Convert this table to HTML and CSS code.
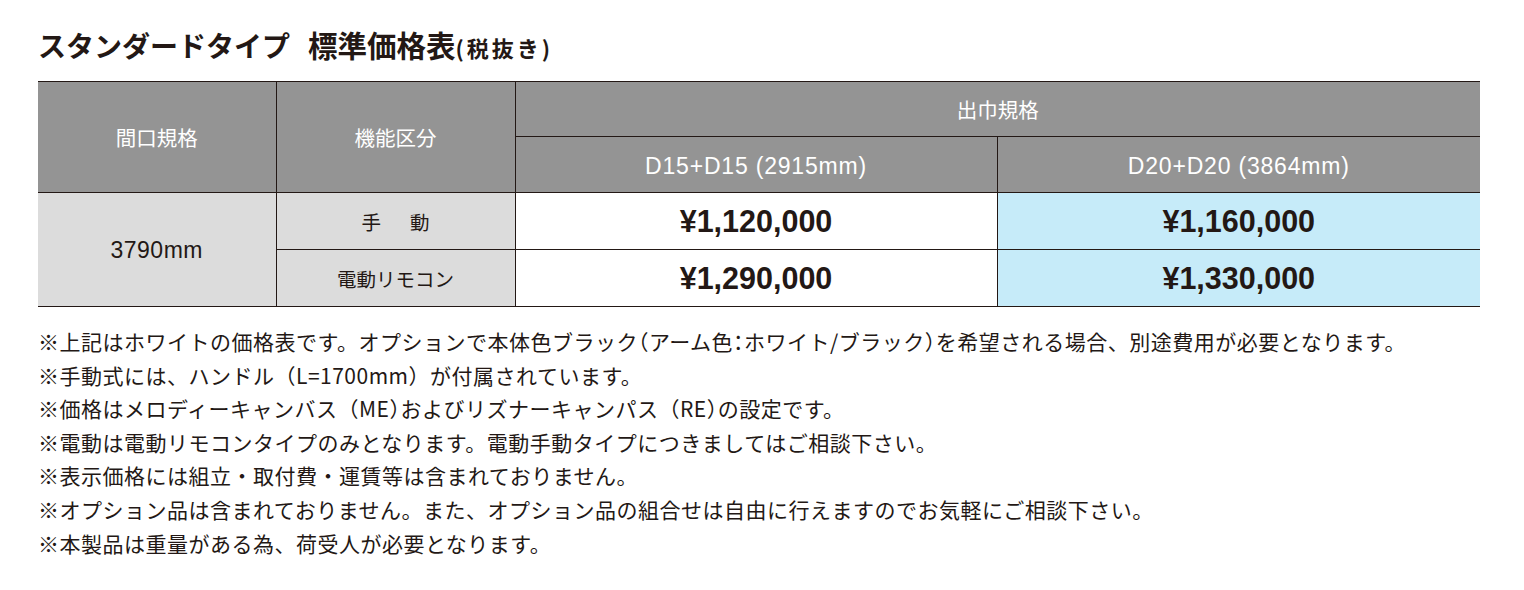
FILE: index.html
```html
<!DOCTYPE html>
<html lang="ja">
<head>
<meta charset="utf-8">
<link rel="stylesheet" href="styles.css">
</head>
<body>
<div class="page">
  <h1 class="title">スタンダードタイプ<span class="title-gap"></span><span class="title-kanji">標準価格表</span><span class="title-sub">(税抜き)</span></h1>
  <table class="price-table">
    <colgroup>
      <col class="c1"><col class="c2"><col class="c3"><col class="c4">
    </colgroup>
    <thead>
      <tr class="h1">
        <th rowspan="2">間口規格</th>
        <th rowspan="2">機能区分</th>
        <th colspan="2">出巾規格</th>
      </tr>
      <tr class="h2">
        <th><span class="latin">D15+D15 (2915mm)</span></th>
        <th><span class="latin">D20+D20 (3864mm)</span></th>
      </tr>
    </thead>
    <tbody>
      <tr>
        <td rowspan="2" class="size"><span class="latin">3790mm</span></td>
        <td class="kind">手<span class="kind-gap"></span>動</td>
        <td class="price">¥1,120,000</td>
        <td class="price blue">¥1,160,000</td>
      </tr>
      <tr>
        <td class="kind">電動リモコン</td>
        <td class="price">¥1,290,000</td>
        <td class="price blue">¥1,330,000</td>
      </tr>
    </tbody>
  </table>
  <ul class="notes">
    <li>※上記はホワイトの価格表です。オプションで本体色ブラック<span class="half">（</span>アーム色<span class="half">：</span>ホワイト/ブラック<span class="half">）</span>を希望される場合、別途費用が必要となります。</li>
    <li>※手動式には、ハンドル（L=1700mm）が付属されています。</li>
    <li>※価格はメロディーキャンバス（ME<span class="half">）</span>およびリズナーキャンパス（RE<span class="half">）</span>の設定です。</li>
    <li>※電動は電動リモコンタイプのみとなります。電動手動タイプにつきましてはご相談下さい。</li>
    <li>※表示価格には組立・取付費・運賃等は含まれておりません。</li>
    <li>※オプション品は含まれておりません。また、オプション品の組合せは自由に行えますのでお気軽にご相談下さい。</li>
    <li>※本製品は重量がある為、荷受人が必要となります。</li>
  </ul>
</div>
</body>
</html>
```

FILE: styles.css
```css
html, body {
  margin: 0;
  padding: 0;
  background: #ffffff;
}
body {
  font-family: "Noto Sans CJK JP", "Noto Sans", sans-serif;
  color: #231815;
}
.page {
  padding: 23px 44px 0 38px;
}
.title {
  margin: 0;
  font-size: 28px;
  font-weight: 700;
  line-height: 42px;
  height: 58px;
  color: #231815;
  white-space: nowrap;
}
.title-gap {
  display: inline-block;
  width: 18px;
}
.title-kanji {
  font-size: 29.5px;
}
.title-sub {
  font-size: 22px;
  letter-spacing: 3px;
}
.price-table {
  width: 1442px;
  border-collapse: collapse;
  table-layout: fixed;
}
.c1 { width: 238px; }
.c2 { width: 239px; }
.c3 { width: 482px; }
.c4 { width: 483px; }
.price-table th,
.price-table td {
  border: 1px solid #231815;
  text-align: center;
  padding: 0;
}
.price-table tr > :first-child { border-left: none; }
.price-table tr > :last-child { border-right: none; }
.price-table td.size { border-left: none; }
.price-table th {
  background: #949494;
  color: #ffffff;
  font-weight: 400;
  font-size: 20.5px;
}
.latin {
  font-family: "Liberation Sans", Arial, sans-serif;
  font-size: 23px;
  letter-spacing: 0.8px;
}
.h1 { height: 55px; }
.h2 { height: 56px; }
.price-table tbody tr { height: 57px; }
.size, .kind {
  background: #dcdcdc;
  font-size: 19.5px;
  color: #231815;
}
.size .latin {
  letter-spacing: 0.5px;
}
.kind-gap {
  display: inline-block;
  width: 29px;
}
.price {
  background: #ffffff;
  font-family: "Liberation Sans", Arial, sans-serif;
  font-size: 30.5px;
  font-weight: 700;
  color: #231815;
}
.price.blue {
  background: #c6ebf9;
}
.notes {
  list-style: none;
  margin: 18px 0 0 0;
  padding: 0;
  font-size: 21px;
  line-height: 33.6px;
  letter-spacing: 0.5px;
  color: #231815;
  white-space: nowrap;
}
.half {
  font-feature-settings: "halt";
}
```
